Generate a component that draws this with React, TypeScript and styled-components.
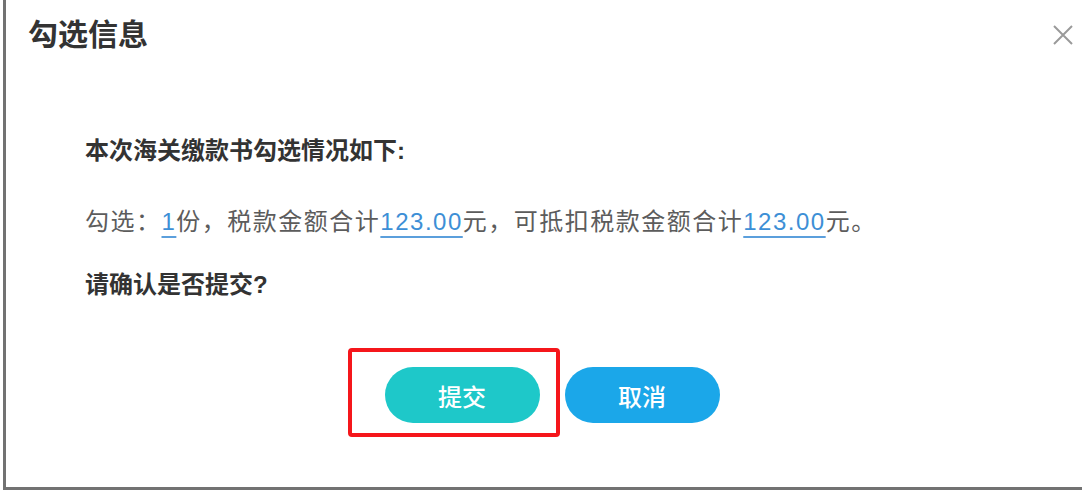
import React from 'react'
import styled, { createGlobalStyle } from 'styled-components'

const GlobalStyle = createGlobalStyle`
  html, body {
    margin: 0;
    padding: 0;
    background: #fff;
    overflow: hidden;
  }
  body {
    font-family: "Liberation Sans", "Noto Sans CJK SC", sans-serif;
  }
`

const Dialog = styled.div`
  box-sizing: border-box;
  width: 1095px;
  height: 490px;
  margin-left: 3px;
  background: #fff;
  border-left: 3px solid #727272;
  border-bottom: 3px solid #727272;
  display: flex;
  flex-direction: column;
`

const Header = styled.div`
  display: flex;
  align-items: center;
  justify-content: space-between;
  padding: 20px 24px 0 22px;
`

const Title = styled.h2`
  margin: 0;
  font-size: 30px;
  line-height: 30px;
  font-weight: 700;
  color: #333;
`

const Close = styled.button`
  border: 0;
  padding: 0;
  background: none;
  width: 22px;
  height: 22px;
  display: flex;
  cursor: pointer;
`

const Body = styled.div`
  padding: 89px 0 0 79px;
  display: flex;
  flex-direction: column;
`

const Line = styled.p<{ $strong?: boolean; $gap: number; $spaced?: boolean }>`
  margin: ${p => p.$gap}px 0 0;
  font-size: 24px;
  line-height: 24px;
  font-weight: ${p => (p.$strong ? 700 : 400)};
  color: ${p => (p.$strong ? '#333' : '#5c5c5c')};
  letter-spacing: ${p => (p.$spaced ? '1.5px' : '0')};
  white-space: nowrap;
`

const Num = styled.span`
  color: #3d8fd6;
  text-decoration: underline;
  text-decoration-color: #5b9fdc;
  text-decoration-thickness: 2px;
  text-underline-offset: 6px;
`

const Footer = styled.div`
  display: flex;
  justify-content: center;
  gap: 25px;
  margin-top: 70px;
`

const Marked = styled.div`
  position: relative;
`

const Highlight = styled.div`
  position: absolute;
  left: -37px;
  top: -19px;
  width: 212px;
  height: 89px;
  box-sizing: border-box;
  border: 4px solid #f5161b;
  border-radius: 4px;
  pointer-events: none;
`

const Button = styled.button<{ $tone: string }>`
  width: 155px;
  height: 56px;
  border: 0;
  border-radius: 28px;
  background: ${p => p.$tone};
  color: #fff;
  font-family: "Liberation Sans", "Noto Sans CJK SC", sans-serif;
  font-size: 24px;
  font-weight: 500;
  cursor: pointer;
`

export default function App() {
  return (
    <>
      <GlobalStyle />
      <Dialog>
        <Header>
          <Title>勾选信息</Title>
          <Close aria-label="关闭">
            <svg width="22" height="22" viewBox="0 0 22 22">
              <path d="M2 2 L20 20 M20 2 L2 20" stroke="#9a9a9a" strokeWidth="2" fill="none" />
            </svg>
          </Close>
        </Header>
        <Body>
          <Line $strong $gap={0}>本次海关缴款书勾选情况如下:</Line>
          <Line $spaced $gap={47}>
            勾选：<Num>1</Num>份，税款金额合计<Num>123.00</Num>元，可抵扣税款金额合计<Num>123.00</Num>元。
          </Line>
          <Line $strong $gap={39}>请确认是否提交?</Line>
        </Body>
        <Footer>
          <Marked>
            <Button $tone="#1ec8c9">提交</Button>
            <Highlight />
          </Marked>
          <Button $tone="#1ba7e9">取消</Button>
        </Footer>
      </Dialog>
    </>
  )
}
